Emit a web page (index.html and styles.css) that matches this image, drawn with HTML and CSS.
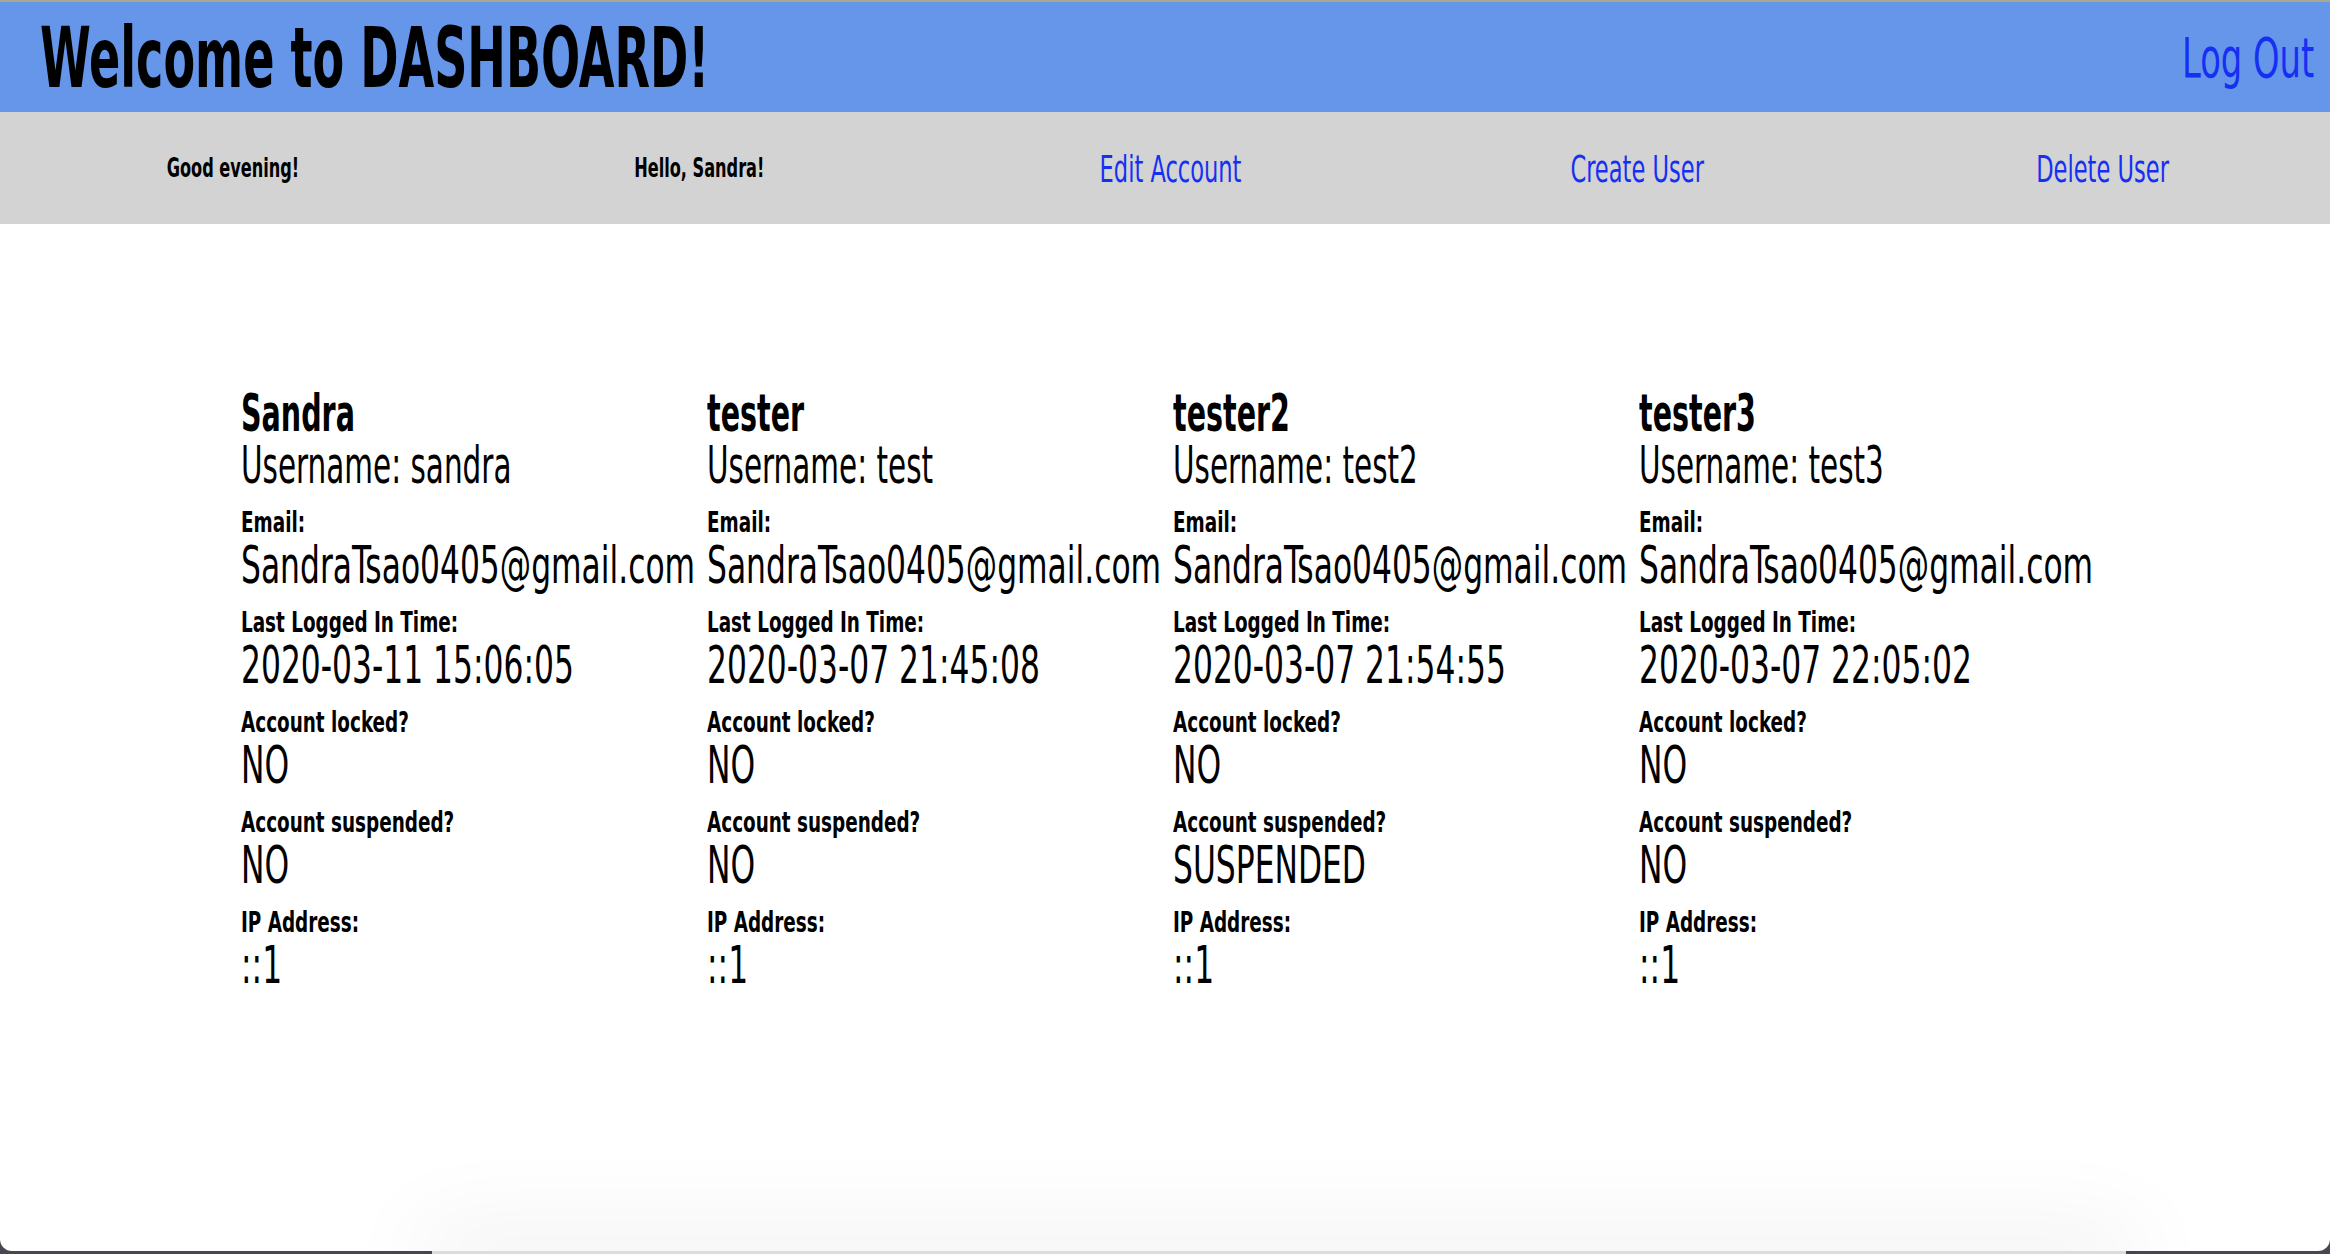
FILE: index.html
```html
<!DOCTYPE html>
<html lang="en">
<head>
<meta charset="utf-8">
<title>Dashboard</title>
<link rel="stylesheet" href="styles.css">
</head>
<body>
<header class="topbar">
  <h1 class="title">Welcome to DASHBOARD!</h1>
  <a class="logout" href="#">Log Out</a>
</header>
<nav class="menu">
  <div class="menu-item"><span class="greet">Good evening!</span></div>
  <div class="menu-item"><span class="greet">Hello, Sandra!</span></div>
  <div class="menu-item"><a class="menu-link" href="#">Edit Account</a></div>
  <div class="menu-item"><a class="menu-link" href="#">Create User</a></div>
  <div class="menu-item"><a class="menu-link" href="#">Delete User</a></div>
</nav>
<main class="users">
  <section class="user">
    <div class="user-name">Sandra</div>
    <div class="user-login">Username: sandra</div>
    <div class="field"><div class="label">Email:</div><div class="value">SandraTsao0405@gmail.com</div></div>
    <div class="field"><div class="label">Last Logged In Time:</div><div class="value">2020-03-11 15:06:05</div></div>
    <div class="field"><div class="label">Account locked?</div><div class="value">NO</div></div>
    <div class="field"><div class="label">Account suspended?</div><div class="value">NO</div></div>
    <div class="field"><div class="label">IP Address:</div><div class="value">::1</div></div>
  </section>
  <section class="user">
    <div class="user-name">tester</div>
    <div class="user-login">Username: test</div>
    <div class="field"><div class="label">Email:</div><div class="value">SandraTsao0405@gmail.com</div></div>
    <div class="field"><div class="label">Last Logged In Time:</div><div class="value">2020-03-07 21:45:08</div></div>
    <div class="field"><div class="label">Account locked?</div><div class="value">NO</div></div>
    <div class="field"><div class="label">Account suspended?</div><div class="value">NO</div></div>
    <div class="field"><div class="label">IP Address:</div><div class="value">::1</div></div>
  </section>
  <section class="user">
    <div class="user-name">tester2</div>
    <div class="user-login">Username: test2</div>
    <div class="field"><div class="label">Email:</div><div class="value">SandraTsao0405@gmail.com</div></div>
    <div class="field"><div class="label">Last Logged In Time:</div><div class="value">2020-03-07 21:54:55</div></div>
    <div class="field"><div class="label">Account locked?</div><div class="value">NO</div></div>
    <div class="field"><div class="label">Account suspended?</div><div class="value">SUSPENDED</div></div>
    <div class="field"><div class="label">IP Address:</div><div class="value">::1</div></div>
  </section>
  <section class="user">
    <div class="user-name">tester3</div>
    <div class="user-login">Username: test3</div>
    <div class="field"><div class="label">Email:</div><div class="value">SandraTsao0405@gmail.com</div></div>
    <div class="field"><div class="label">Last Logged In Time:</div><div class="value">2020-03-07 22:05:02</div></div>
    <div class="field"><div class="label">Account locked?</div><div class="value">NO</div></div>
    <div class="field"><div class="label">Account suspended?</div><div class="value">NO</div></div>
    <div class="field"><div class="label">IP Address:</div><div class="value">::1</div></div>
  </section>
</main>
<div class="under-window"></div>
</body>
</html>
```
FILE: styles.css
```css
html {
  background: #4a4552;
  overflow: hidden;
  height: 1254px;
}

body {
  margin: 0;
  height: 1251px;
  box-sizing: border-box;
  border-top: 2px solid #aba78b;
  background: #ffffff;
  border-radius: 0 0 12px 12px;
  font-family: "DejaVu Sans Condensed", "DejaVu Sans", sans-serif;
  font-stretch: condensed;
  color: #000;
}

.topbar {
  height: 110px;
  background: #6596ea;
  display: flex;
  align-items: center;
  justify-content: space-between;
  padding: 2px 16px 0 40px;
  box-sizing: border-box;
}

.title {
  margin: 0;
  font-size: 84px;
  line-height: 1;
  font-weight: 700;
  white-space: nowrap;
  transform: scaleX(0.61);
  transform-origin: left center;
}

.logout {
  font-size: 56px;
  line-height: 1;
  color: #1530f2;
  text-decoration: none;
  white-space: nowrap;
  transform: scaleX(0.67);
  transform-origin: right center;
}

.menu {
  height: 112px;
  background: #d3d3d3;
  display: grid;
  grid-template-columns: repeat(5, 1fr);
  align-items: center;
  justify-items: center;
}

.menu-item {
  display: flex;
  justify-content: center;
}

.greet {
  display: inline-block;
  font-size: 26px;
  font-weight: 700;
  white-space: nowrap;
  transform: scaleX(0.69);
}

.menu-link {
  display: inline-block;
  font-size: 38px;
  line-height: 1.2;
  margin: 4px 0 0 12px;
  color: #1530f2;
  text-decoration: none;
  white-space: nowrap;
  transform: scaleX(0.66);
}

.users {
  display: grid;
  grid-template-columns: repeat(4, 466px);
  padding: 164px 0 0 241px;
}

.user-name {
  font-size: 52px;
  line-height: 50px;
  font-weight: 700;
  white-space: nowrap;
  transform: scaleX(0.61);
  transform-origin: left center;
}

.user-login {
  font-size: 52px;
  line-height: 54px;
  white-space: nowrap;
  transform: scaleX(0.63);
  transform-origin: left center;
}

.field {
  margin-top: 16px;
}

.label {
  font-size: 28px;
  line-height: 30px;
  font-weight: 700;
  white-space: nowrap;
  transform: scaleX(0.73);
  transform-origin: left center;
}

.value {
  font-size: 52px;
  line-height: 54px;
  white-space: nowrap;
  transform: scaleX(0.67);
  transform-origin: left center;
}

.under-window {
  position: absolute;
  left: 432px;
  top: 1251px;
  width: 1694px;
  height: 3px;
  background: #dcdcdc;
  box-shadow: 0 0 90px 12px rgba(0, 0, 0, 0.12);
}
```
